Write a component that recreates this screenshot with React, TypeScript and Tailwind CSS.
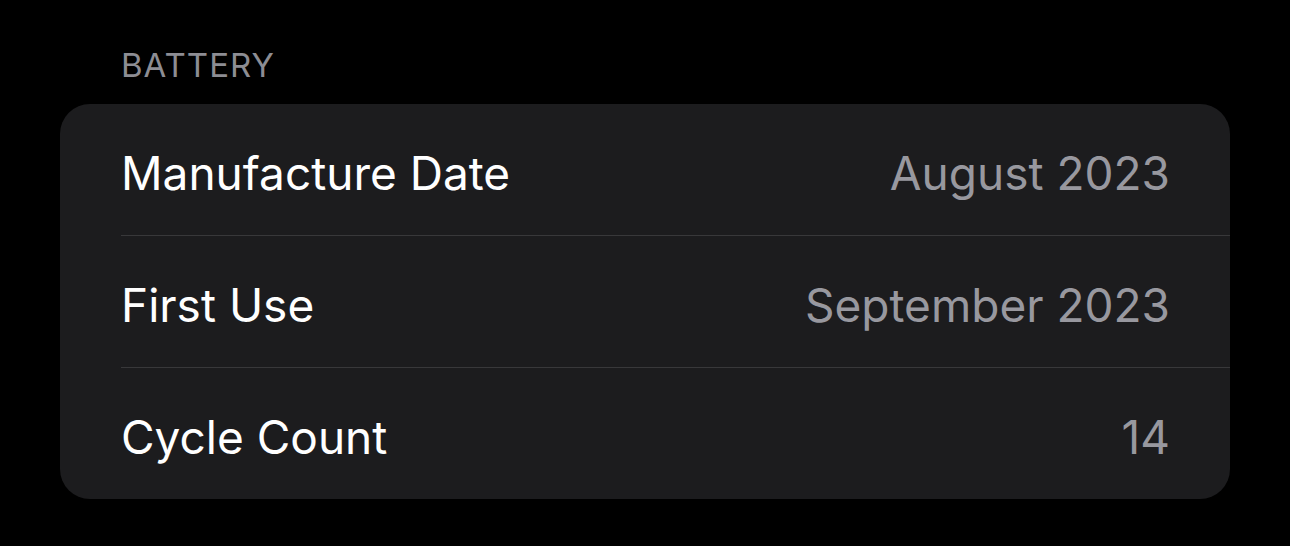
import React from "react";

const rows = [
  { label: "Manufacture Date", value: "August 2023", h: "h-[132px]" },
  { label: "First Use", value: "September 2023", h: "h-[132px]" },
  { label: "Cycle Count", value: "14", h: "h-[131px]" },
];

export default function App() {
  return (
    <div
      className="w-[1290px] h-[546px] bg-black overflow-hidden"
      style={{ fontFamily: "Inter, 'Noto Sans', 'Liberation Sans', sans-serif" }}
    >
      <div className="pt-[45px] px-[60px]">
        <div className="pl-[61px] h-[40px] leading-[40px] text-[33px] text-[#8d8d93] tracking-[1px]">
          BATTERY
        </div>
        <div className="mt-[19px] w-[1170px] bg-[#1c1c1e] rounded-[30px] overflow-hidden">
          {rows.map((r, i) => (
            <div key={r.label} className="pl-[61px]">
              <div
                className={
                  r.h +
                  " flex items-center justify-between pr-[60px] pt-[6px] " +
                  (i < rows.length - 1 ? "border-b border-[#38383a]" : "")
                }
              >
                <span className="text-[46px] text-white leading-none">{r.label}</span>
                <span className="text-[46px] text-[#98989f] leading-none">{r.value}</span>
              </div>
            </div>
          ))}
        </div>
      </div>
    </div>
  );
}
